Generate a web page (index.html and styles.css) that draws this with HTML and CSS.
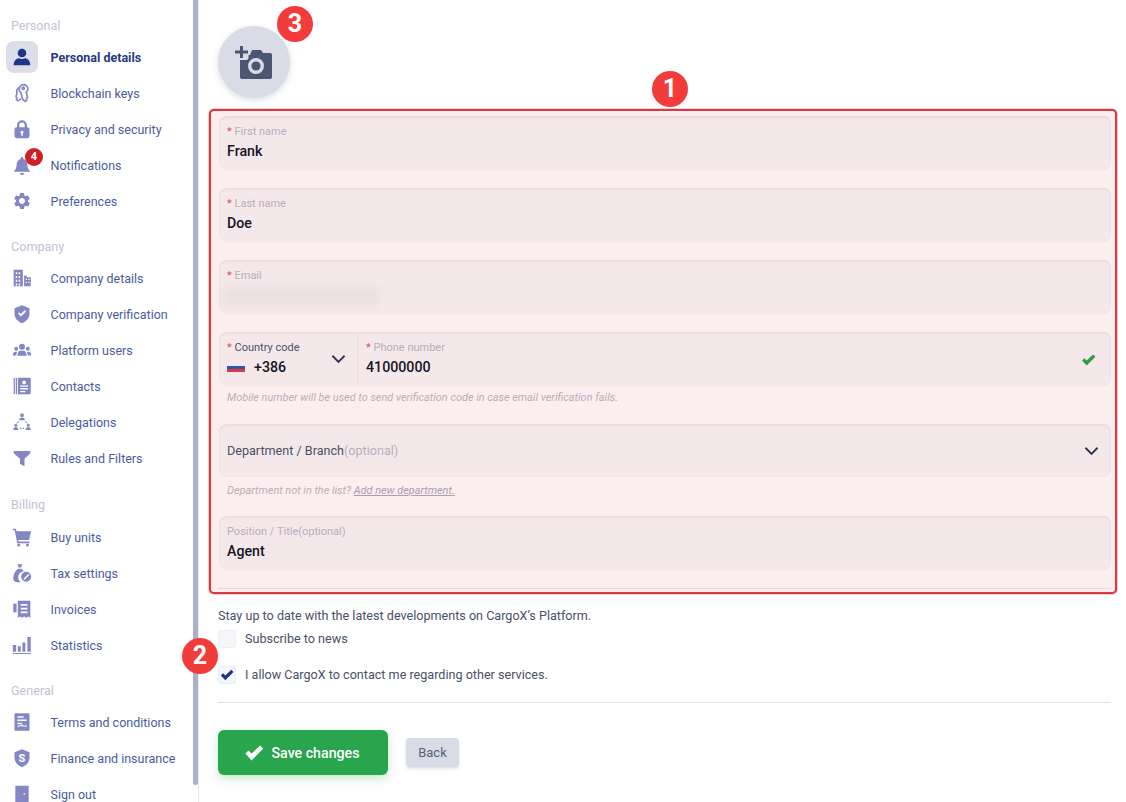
FILE: index.html
```html
<!DOCTYPE html>
<html lang="en">
<head>
<meta charset="utf-8">
<title>Personal details</title>
<link rel="stylesheet" href="styles.css">
</head>
<body>
<div class="page">
  <aside class="sidebar">
    <div class="nav">
      <div class="section-title first">Personal</div>
      <a class="item active"><span class="icon"><svg viewBox="0 0 24 24"><circle cx="12" cy="7.200" r="5.200"/><path d="M2 22c0-6 3.500-8.600 6.500-8.600 1 .6 2.200 1 3.500 1s2.500-.4 3.500-1c3 0 6.500 2.600 6.500 8.600z"/></svg></span><span class="label">Personal details</span></a>
      <a class="item"><span class="icon"><svg viewBox="0 0 24 24" class="line"><path d="M13.500 2c3.300 0 5.500 2.300 5.500 5.200 0 1.800-.8 3-2 3.900l1.700 6-1.400 1.500.4 2-2 1.400-3-2.500-1.900-7.800c-1.500-1-2.100-2.500-2.100-4C8.700 4.500 10.700 2 13.500 2z"/><path d="M8.300 5.500C6 7.500 5 10 6 12.300L4.800 16l1 2-.5 2 2 1.400 3.400-2.300"/><circle cx="13.500" cy="6.300" r="1.300"/></svg></span><span class="label">Blockchain keys</span></a>
      <a class="item"><span class="icon"><svg viewBox="0 0 24 24"><path fill-rule="evenodd" d="M6 10V7.500a6 6 0 0 1 12 0V10h.500A2.500 2.500 0 0 1 21 12.500v8a2.500 2.500 0 0 1-2.500 2.500h-13A2.500 2.500 0 0 1 3 20.500v-8A2.500 2.500 0 0 1 5.500 10zm2.800 0h6.400V7.500a3.200 3.200 0 0 0-6.400 0zM12 14a1.800 1.800 0 0 0-1 3.300V20h2v-2.700A1.800 1.800 0 0 0 12 14z"/></svg></span><span class="label">Privacy and security</span></a>
      <a class="item"><span class="icon"><svg viewBox="0 0 24 24"><path d="M12 2.500c.9 0 1.600.7 1.600 1.600v.6c3 .8 4.900 3.500 4.900 6.800 0 4 .9 5.800 3 7.500v1H2.500v-1c2.100-1.700 3-3.500 3-7.500 0-3.300 1.900-6 4.900-6.800v-.6c0-.9.7-1.600 1.600-1.600zM9.500 21.500h5a2.500 2.500 0 0 1-5 0z"/></svg></span><span class="count">4</span><span class="label">Notifications</span></a>
      <a class="item"><span class="icon"><svg viewBox="0 0 24 24"><path d="M19.140 12.940c.04-.3.06-.61.06-.94 0-.32-.02-.64-.07-.94l2.030-1.580c.18-.14.23-.41.12-.61l-1.920-3.320c-.12-.22-.37-.29-.59-.22l-2.390.96c-.5-.38-1.030-.7-1.620-.94l-.36-2.540c-.04-.24-.24-.41-.48-.41h-3.840c-.24 0-.43.17-.47.41l-.36 2.540c-.59.24-1.130.57-1.620.94l-2.390-.96c-.22-.08-.47 0-.59.22L2.740 8.870c-.12.21-.08.47.12.61l2.030 1.580c-.05.3-.09.63-.09.94s.02.64.07.94l-2.030 1.580c-.18.14-.23.41-.12.61l1.920 3.320c.12.22.37.29.59.22l2.390-.96c.5.38 1.030.7 1.620.94l.36 2.540c.05.24.24.41.48.41h3.840c.24 0 .44-.17.47-.41l.36-2.540c.59-.24 1.130-.56 1.620-.94l2.390.96c.22.08.47 0 .59-.22l1.920-3.320c.12-.22.07-.47-.12-.61l-2.010-1.580zM12 15.600c-1.980 0-3.600-1.620-3.600-3.600s1.620-3.600 3.600-3.600 3.600 1.620 3.600 3.600-1.620 3.600-3.600 3.600z"/></svg></span><span class="label">Preferences</span></a>

      <div class="section-title">Company</div>
      <a class="item"><span class="icon"><svg viewBox="0 0 24 24"><path fill-rule="evenodd" d="M2 2h11v20H2zm2.500 3v2.500h1.800V5zm3.500 0v2.500h1.800V5zM4.500 9.500V12h1.800V9.500zm3.500 0V12h1.800V9.500zM4.500 14v2.500h1.800V14zm3.500 0v2.500h1.800V14zM4.500 18.500V21h1.800v-2.500zm3.500 0V21h1.800v-2.500z"/><path fill-rule="evenodd" d="M14.500 9h3v2h5v11h-8zm2 4v1.500h1.500V13zm3 0v1.500h1.500V13zm-3 3.500V18h1.500v-1.500zm3 0V18h1.500v-1.500z"/></svg></span><span class="label">Company details</span></a>
      <a class="item"><span class="icon"><svg viewBox="0 0 24 24"><path fill-rule="evenodd" d="M12 1.500l9 3.500v6.500c0 5.500-3.700 9.700-9 11.500-5.300-1.800-9-6-9-11.500V5zm5 7.500l-1.700-1.700-4.600 4.800-2.100-2L7 11.200l3.700 3.800z"/></svg></span><span class="label">Company verification</span></a>
      <a class="item"><span class="icon"><svg viewBox="0 0 24 24"><circle cx="12" cy="8" r="3.600"/><circle cx="5" cy="10.500" r="2.300"/><circle cx="19" cy="10.500" r="2.300"/><path d="M6.500 19c0-4 2-6 3.500-6h4c1.500 0 3.500 2 3.500 6z"/><path d="M1 18.500c0-2.500 1-4.500 3-4.500h2.300c-.8 1.200-1.200 2.800-1.300 4.500zM23 18.500c0-2.500-1-4.500-3-4.500h-2.300c.8 1.200 1.200 2.800 1.300 4.500z"/></svg></span><span class="label">Platform users</span></a>
      <a class="item"><span class="icon"><svg viewBox="0 0 24 24"><path fill-rule="evenodd" d="M7 2h14a1.500 1.500 0 0 1 1.500 1.500v17A1.500 1.500 0 0 1 21 22H7zm7.500 3.500a2.200 2.200 0 1 0 0 4.400 2.200 2.200 0 0 0 0-4.400zM10 11v2h9v-2.500c-1 .8-2.500 1-4.500 1s-3.500-.2-4.500-.5zm0 3.500v1.800h9v-1.800zm0 3.500v1.500h6V18z"/><path d="M2 2.500h1.500v19H2zM4.500 2h1.500v20H4.500z"/></svg></span><span class="label">Contacts</span></a>
      <a class="item"><span class="icon"><svg viewBox="0 0 24 24"><circle cx="12" cy="3.800" r="2.200"/><path d="M8.500 10c0-2.200 1.500-3.500 3.500-3.500s3.500 1.300 3.500 3.500z"/><circle cx="4.500" cy="15.800" r="1.800"/><path d="M1.500 21.500c0-2 1.300-3.500 3-3.500s3 1.500 3 3.500z"/><circle cx="19.500" cy="15.800" r="1.800"/><path d="M16.500 21.500c0-2 1.300-3.500 3-3.500s3 1.500 3 3.500z"/><path class="dash" d="M8 11.500l-3 3M16 11.500l3 3M9.500 19.500h5"/></svg></span><span class="label">Delegations</span></a>
      <a class="item"><span class="icon"><svg viewBox="0 0 24 24"><path d="M2 3.500h20v2.800l-7 6.500V22l-5.500-3v-6.200L2 6.300z"/></svg></span><span class="label">Rules and Filters</span></a>

      <div class="section-title billing">Billing</div>
      <a class="item"><span class="icon"><svg viewBox="0 0 24 24"><path d="M1 2h3.500l1 3h17.500l-2.500 10.500H7.500l.5 2h13v2H6.300L3.200 4H1z"/><circle cx="8" cy="21.700" r="1.800"/><circle cx="18.500" cy="21.700" r="1.800"/></svg></span><span class="label">Buy units</span></a>
      <a class="item"><span class="icon"><svg viewBox="0 0 24 24"><path fill-rule="evenodd" d="M6.500 1.500h6L10.800 5.500h-3zM7 7h4.500c1 1 1.800 2 2.400 3.200A7 7 0 0 0 10.500 23H6c-3 0-4.500-2-4.500-5 0-4.500 2.500-8 5.500-11zM17 10.500a6 6 0 1 1 0 12 6 6 0 0 1 0-12zm2.600 2.700l-5.800 5.800 1.200 1.200 5.800-5.800z"/></svg></span><span class="label">Tax settings</span></a>
      <a class="item"><span class="icon"><svg viewBox="0 0 24 24"><path fill-rule="evenodd" d="M7 2h15v20.500l-2.500-1.500-2.500 1.500-2.500-1.500-2.500 1.500-2.500-1.500L7 22.500zm3.500 4v2.200h8V6zm0 4.500v2.200h8v-2.200zm0 4.500v2.200h8V15z"/><path d="M1.500 5.500h4V16h-4z"/></svg></span><span class="label">Invoices</span></a>
      <a class="item"><span class="icon"><svg viewBox="0 0 24 24"><path d="M1 12h4v8H1zM7 13.500h3.500V20H7zM12.500 9H16v11h-3.500zM18.500 2.500H22.500V20h-4zM1 21.500h21.500v1.300H1z"/></svg></span><span class="label">Statistics</span></a>

      <div class="section-title">General</div>
      <a class="item"><span class="icon"><svg viewBox="0 0 24 24"><path fill-rule="evenodd" d="M4 1.500h16a1 1 0 0 1 1 1v19a1 1 0 0 1-1 1H4a1 1 0 0 1-1-1v-19a1 1 0 0 1 1-1zM6.500 5v1.800H14V5zm0 4v1.800h11V9zm0 4v1.800H12V13zm1 5.500c1.500-1.800 2.500-2 3.500-1l1.200-.8.800.8H18v-1.200h-4l-1.300-1.200-1.700 1c-1.500-.8-3-.3-4.500 1.500z"/></svg></span><span class="label">Terms and conditions</span></a>
      <a class="item"><span class="icon"><svg viewBox="0 0 24 24"><path d="M12 1.500l9 3.500v6.500c0 5.500-3.700 9.700-9 11.500-5.300-1.800-9-6-9-11.500V5z"/></svg><span class="glyph">S</span></span><span class="label">Finance and insurance</span></a>
      <a class="item"><span class="icon"><svg viewBox="0 0 24 24"><path fill-rule="evenodd" d="M4 2h16v20H4zm10 9v2h1.500v-2z"/></svg></span><span class="label">Sign out</span></a>
    </div>
    <div class="scrollbar"></div>
  </aside>

  <main class="main">
    <div class="avatar">
      <svg viewBox="0 0 39 35" class="camera"><path d="M1 5.500h5V1h3v4.500h5v3H9V13H6V8.500H1z"/><path fill-rule="evenodd" d="M10.500 15h2a2 2 0 0 0 2-2v-3H16l2-5h9l2 3h7a2 2 0 0 1 2 2v22a2 2 0 0 1-2 2H8a2 2 0 0 1-2-2V15zM22 13a8 8 0 1 0 0 16 8 8 0 0 0 0-16z"/><circle cx="22" cy="21" r="4.600"/></svg>
    </div>
    <span class="marker marker-3">3</span>

    <form class="highlight">
      <span class="marker marker-1">1</span>
      <div class="field">
        <div class="caption"><i>*</i> First name</div>
        <div class="value">Frank</div>
      </div>
      <div class="field">
        <div class="caption"><i>*</i> Last name</div>
        <div class="value">Doe</div>
      </div>
      <div class="field">
        <div class="caption"><i>*</i> Email</div>
        <div class="blurred"></div>
      </div>
      <div class="field phone">
        <div class="country">
          <div class="country-text">
            <div class="caption dark"><i>*</i> Country code</div>
            <div class="value flag-row"><span class="flag"></span>+386</div>
          </div>
          <svg class="chev" viewBox="0 0 16 10"><path d="M1.500 1.500L8 8l6.500-6.500"/></svg>
        </div>
        <div class="number">
          <div>
            <div class="caption"><i>*</i> Phone number</div>
            <div class="value">41000000</div>
          </div>
          <svg class="tick" viewBox="0 0 16 13"><path d="M1 7l2.500-2.500L6 7l7-6.500L15.500 3 6 12.500z"/></svg>
        </div>
      </div>
      <p class="hint">Mobile number will be used to send verification code in case email verification fails.</p>
      <div class="field select">
        <div class="select-text">Department / Branch<span>(optional)</span></div>
        <svg class="chev" viewBox="0 0 16 10"><path d="M1.500 1.500L8 8l6.500-6.500"/></svg>
      </div>
      <p class="hint">Department not in the list? <u>Add new department.</u></p>
      <div class="field last">
        <div class="caption">Position / Title(optional)</div>
        <div class="value">Agent</div>
      </div>
      <div class="inner-rule"></div>
    </form>

    <p class="intro">Stay up to date with the latest developments on CargoX’s Platform.</p>
    <div class="check-row">
      <span class="box"></span>
      <span class="check-text">Subscribe to news</span>
    </div>
    <div class="check-row">
      <span class="box"><svg viewBox="0 0 16 13"><path d="M1 7l2.500-2.500L6 7l7-6.500L15.500 3 6 12.500z"/></svg></span>
      <span class="check-text">I allow CargoX to contact me regarding other services.</span>
      <span class="marker marker-2">2</span>
    </div>
    <div class="rule"></div>
    <div class="actions">
      <button class="save" type="button"><svg viewBox="0 0 16 13"><path d="M1 7l2.500-2.500L6 7l7-6.500L15.500 3 6 12.500z"/></svg>Save changes</button>
      <button class="back" type="button">Back</button>
    </div>
  </main>
</div>
</body>
</html>
```

FILE: styles.css
```css
* { box-sizing: border-box; }
html, body { margin: 0; height: 100%; background: #fff; overflow: hidden; }
body { font-family: Roboto, "Liberation Sans", sans-serif; font-size: 12.600px; color: #4a5068; }

.page { display: flex; width: 1126px; height: 802px; overflow: hidden; }

.sidebar { position: relative; flex: 0 0 199px; height: 802px; border-right: 1px solid #e8e9f0; overflow: hidden; }
.nav { padding: 16px 0 0 6px; }
.section-title { height: 20px; line-height: 20px; margin: 18px 0 3px 5px; font-size: 12.600px; color: #bfc3d2; }
.section-title.first { margin-top: 0; }
.section-title.billing { margin-top: 19px; margin-bottom: 4px; }
.item { position: relative; display: flex; align-items: center; height: 36px; color: #4c5b9c; font-size: 12.500px; }
.icon { position: relative; flex: 0 0 32px; height: 32px; margin-right: 12.500px; border-radius: 8px; display: flex; align-items: center; justify-content: center; }
.icon svg { width: 20px; height: 20px; fill: #8587c4; }
.icon svg.line { fill: none; stroke: #8587c4; stroke-width: 2; }
.icon .dash { fill: none; stroke: #8587c4; stroke-width: 1.500; stroke-dasharray: 2 1.500; }
.glyph { position: absolute; inset: 0; display: flex; align-items: center; justify-content: center; color: #fff; font-size: 11px; font-weight: 700; }
.item.active { color: #28397f; font-weight: 700; }
.item.active .icon { background: #dcdfe9; }
.item.active .icon svg { fill: #1e3688; }
.count { position: absolute; left: 19px; top: 1px; width: 18px; height: 18px; border-radius: 50%; background: #cf1f27; color: #fff; font-size: 11px; font-weight: 700; line-height: 18px; text-align: center; }
.scrollbar { position: absolute; right: 0; top: 0; width: 5px; height: 785px; background: #aab2cb; border-radius: 0 0 3px 3px; }

.main { position: relative; flex: 1; min-width: 0; padding: 26px 15px 0 19px; }
.avatar { width: 72px; height: 72px; border-radius: 50%; background: #d9dce6; box-shadow: 0 2px 6px rgba(80, 90, 120, .22); display: flex; align-items: center; justify-content: center; }
.camera { width: 39px; height: 35px; fill: #4b5673; margin: 0 2px 0 0; }

.marker { position: absolute; width: 36px; height: 36px; border-radius: 50%; background: #f23c3c; color: #fff; font-size: 25px; font-weight: 700; line-height: 36px; text-align: center; }
.marker-3 { left: 78px; top: 6px; }
.marker-1 { left: 441px; top: -40px; }
.marker-2 { left: -36px; top: -28px; }

.highlight { position: relative; margin: 11px -6px 0 -9px; height: 485px; padding: 5px 4px 0 8px; background: #fceeee; border: 2px solid #d83a44; border-radius: 5px; box-shadow: 0 0 0 .5px rgba(216, 58, 68, .5); }
.field { height: 54px; margin-bottom: 18px; padding: 8px 8px 0; background: #f5e8ea; border-radius: 8px; box-shadow: inset 0 2px 2px rgba(120, 100, 120, .08), inset 0 0 0 1px rgba(120, 100, 120, .03); }
.caption { height: 15px; line-height: 15px; font-size: 11px; color: #b9adbb; }
.caption i { font-style: normal; color: #d9505a; }
.caption.dark { color: #4a5068; }
.value { margin-top: 2px; height: 20px; line-height: 20px; font-size: 14.200px; font-weight: 500; color: #141426; }
.blurred { width: 155px; height: 19px; margin: 4px 0 0 -3px; background: #ebe0e2; border-radius: 3px; filter: blur(3px); }

.phone { display: flex; padding: 0; margin-bottom: 4px; }
.country { flex: 0 0 140px; display: flex; align-items: center; justify-content: space-between; padding: 8px 11px 0 8px; border-right: 2px solid #efe2e4; }
.country-text { align-self: flex-start; }
.flag-row { display: flex; align-items: center; }
.flag { width: 18px; height: 9px; margin-right: 9px; background: linear-gradient(#eef0f6 0 33%, #2b56b8 33% 66%, #dc3a3a 66%); }
.chev { width: 15px; height: 10px; fill: none; stroke: #2e3552; stroke-width: 2; }
.country .chev { margin-top: -8px; }
.number { flex: 1; display: flex; align-items: center; justify-content: space-between; padding: 8px 15px 0 7px; }
.number > div { align-self: flex-start; }
.tick { width: 15px; height: 12px; fill: #2f9e44; margin-top: -7px; }

.hint { margin: 0 0 19px; padding-left: 8px; height: 15px; line-height: 15px; font-size: 10.900px; font-style: italic; color: #b9adbb; }
.hint u { color: #a89eae; }
.select { display: flex; align-items: center; justify-content: space-between; padding: 0 12px 0 8px; height: 53px; margin-bottom: 6px; }
.select-text { font-size: 12.600px; color: #4a5068; }
.select-text span { color: #b9adbb; }
.select + .hint { margin-bottom: 18px; }
.last { margin-bottom: 18px; }
.inner-rule { height: 1px; margin-left: -1px; background: #e3d8e0; }

.intro { margin: 13px 0 5px; height: 18px; line-height: 18px; font-size: 12.600px; }
.check-row { position: relative; display: flex; align-items: center; gap: 9px; height: 18px; margin-bottom: 18px; font-size: 12.600px; }
.check-text { padding-bottom: 2px; }
.box { flex: 0 0 18px; height: 18px; border-radius: 3px; background: #f5f6fa; box-shadow: inset 0 0 0 1px #eceef4; display: flex; align-items: center; justify-content: center; }
.box svg { width: 14px; height: 12px; fill: #1e3688; }
.rule { height: 1px; background: #e0e1ea; }
.actions { display: flex; align-items: center; gap: 18px; margin-top: 27px; }
.save { display: flex; align-items: center; justify-content: center; gap: 8px; width: 170px; height: 45px; border: 0; border-radius: 6px; background: #29a64d; color: #fff; font: 500 14.200px Roboto, "Liberation Sans", sans-serif; box-shadow: 0 4px 10px rgba(41, 166, 77, .25); padding: 0 3px 0 0; }
.save svg { width: 20px; height: 16px; fill: #fff; }
.back { width: 53px; height: 29px; border: 0; border-radius: 4px; background: #d9dce6; color: #5a6078; font: 400 13px Roboto, "Liberation Sans", sans-serif; box-shadow: 0 2px 3px rgba(80, 90, 120, .18); padding: 0; }
```
